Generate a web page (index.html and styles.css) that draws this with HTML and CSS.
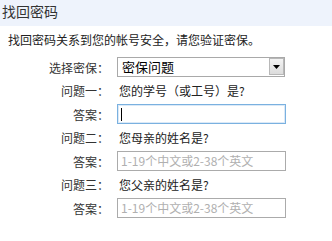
FILE: index.html
```html
<!DOCTYPE html>
<html lang="zh-CN">
<head>
<meta charset="utf-8">
<title>找回密码</title>
<link rel="stylesheet" href="styles.css">
</head>
<body>
<div class="header">找回密码</div>
<p class="intro">找回密码关系到您的帐号安全，请您验证密保。</p>
<div class="form">
  <div class="label">选择密保：</div>
  <div class="select">
    <span class="select-text">密保问题</span>
    <span class="select-btn"><svg width="7" height="4" viewBox="0 0 7 4"><path d="M0 0H7L3.5 4Z" fill="#000"/></svg></span>
  </div>

  <div class="label">问题一：</div>
  <div class="question">您的学号（或工号）是?</div>
  <div class="label">答案：</div>
  <div class="input focus"><span class="caret"></span></div>

  <div class="label">问题二：</div>
  <div class="question">您母亲的姓名是?</div>
  <div class="label">答案：</div>
  <div class="input"><span class="ph">1-19个中文或2-38个英文</span></div>

  <div class="label">问题三：</div>
  <div class="question">您父亲的姓名是?</div>
  <div class="label">答案：</div>
  <div class="input"><span class="ph">1-19个中文或2-38个英文</span></div>
</div>
</body>
</html>
```

FILE: styles.css
```css
html, body {
  margin: 0;
  padding: 0;
  background: #fff;
}
body {
  font-family: "Noto Sans CJK SC", "Liberation Sans", sans-serif;
  font-size: 12px;
  color: #222;
}
.header {
  height: 26px;
  line-height: 22px;
  padding-left: 2px;
  background: #eef3fc;
  font-size: 14px;
  color: #333;
}
.intro {
  margin: 7px 0 0 8px;
  line-height: 14px;
  height: 14px;
}
.form {
  display: grid;
  grid-template-columns: 109px 169px;
  grid-auto-rows: auto;
  column-gap: 8px;
  row-gap: 4px;
  margin-top: 10px;
}
.label {
  text-align: right;
  line-height: 19px;
  align-self: center;
  color: #333;
}
.question {
  line-height: 19px;
  height: 19px;
  padding-left: 2px;
  color: #222;
}
.select {
  box-sizing: border-box;
  height: 20px;
  width: 168px;
  border: 1px solid #a9a9a9;
  display: flex;
  align-items: stretch;
  justify-content: space-between;
  background: #fff;
}
.select-text {
  font-size: 13px;
  line-height: 18px;
  padding-left: 4px;
  color: #000;
}
.select-btn {
  width: 15px;
  margin: 0 0 1px 0;
  box-sizing: border-box;
  border: 1px solid #b8b8b8;
  background: linear-gradient(#f4f4f4, #dcdcdc);
  display: flex;
  align-items: center;
  justify-content: center;
}
.input {
  box-sizing: border-box;
  height: 20px;
  width: 169px;
  border: 1px solid #ababab;
  background: #fff;
  display: flex;
  align-items: center;
  padding-left: 3px;
}
.input.focus {
  border-color: #7ab1e0;
  box-shadow: inset 0 0 0 1px #dbe9f7;
}
.caret {
  width: 1px;
  height: 13px;
  background: #000;
}
.ph {
  color: #b0b0b0;
  font-size: 12px;
  line-height: 18px;
}
```
